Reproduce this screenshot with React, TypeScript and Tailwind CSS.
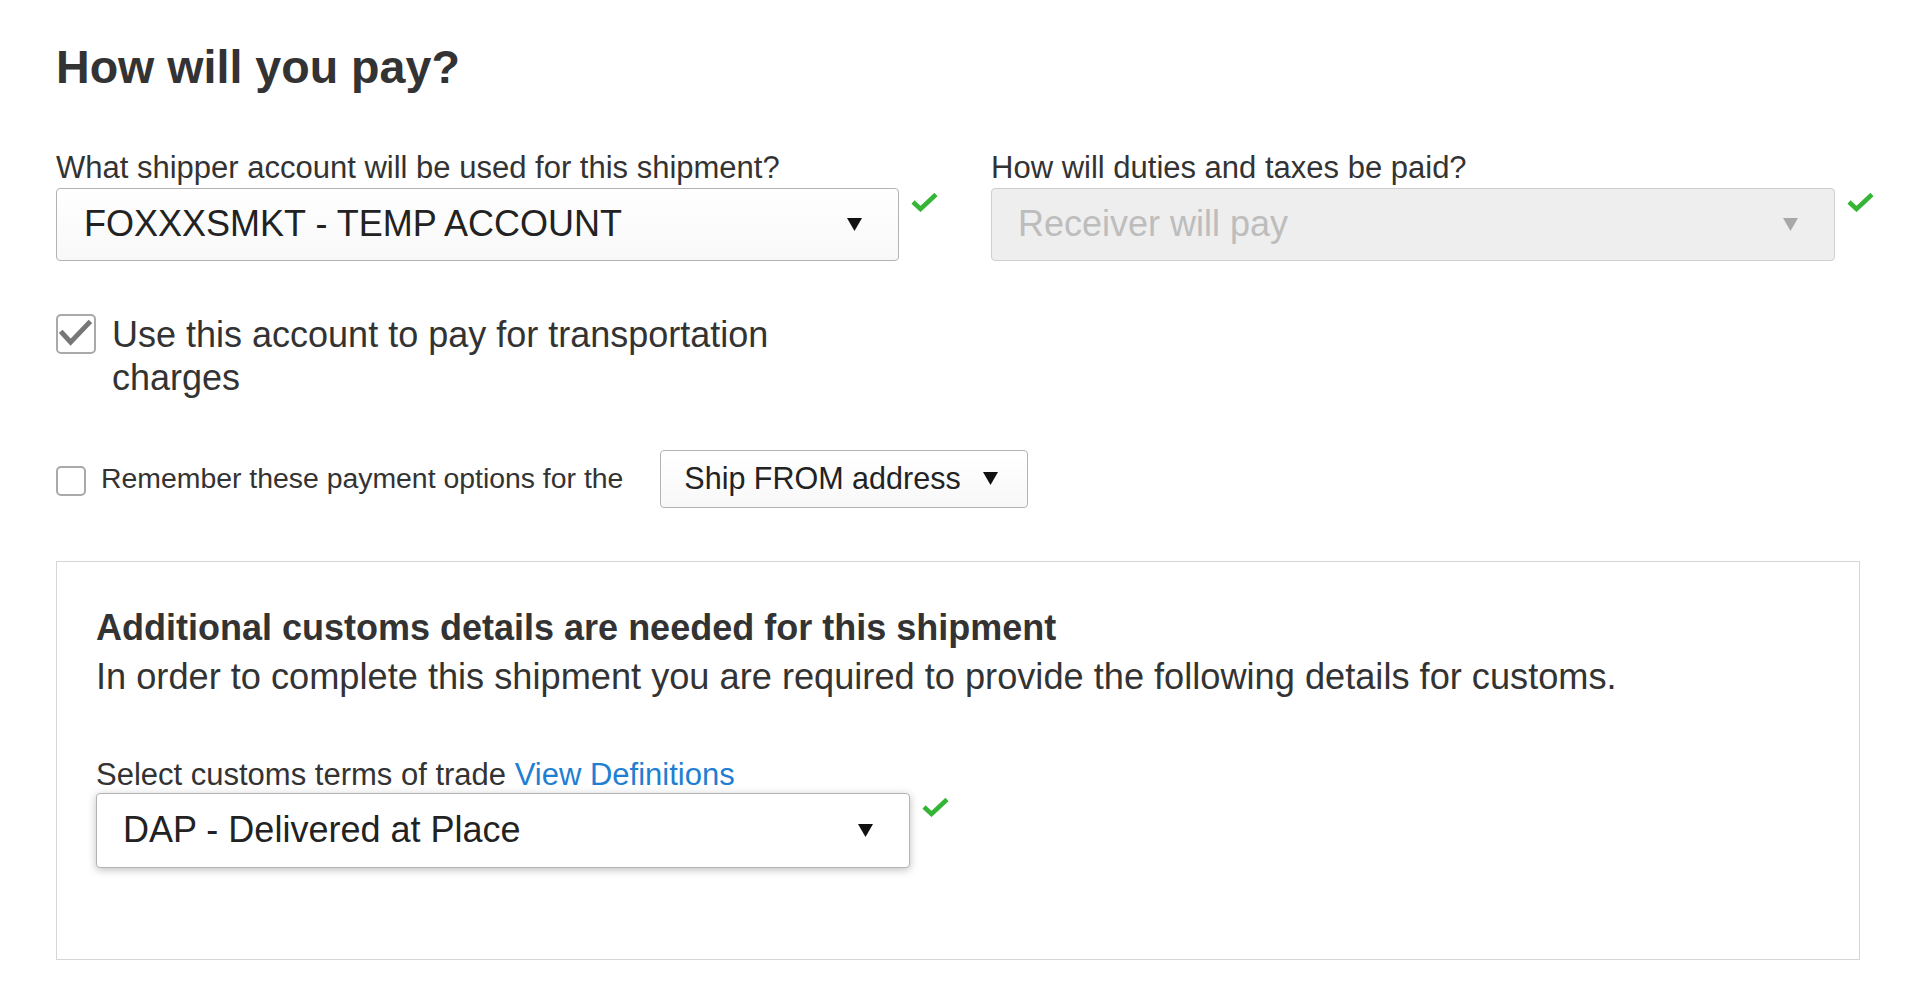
import React from 'react';

const Check: React.FC = () => (
  <svg width="27" height="20" viewBox="0 0 27 20" className="shrink-0 mt-[4px] ml-[12px]">
    <path d="M2 10 L9.5 17 L25 2.5" fill="none" stroke="#35b535" strokeWidth="4.5" />
  </svg>
);

const Caret: React.FC<{ color?: string }> = ({ color = '#111' }) => (
  <svg width="15" height="13" viewBox="0 0 15 13" className="shrink-0">
    <path d="M0 0 H15 L7.5 13 Z" fill={color} />
  </svg>
);

const App: React.FC = () => {
  return (
    <div className="min-h-screen bg-white text-[#333] font-['Liberation_Sans',Arial,sans-serif] pl-[56px] pt-[44px]">
      <h1 className="text-[46.6px] leading-none font-bold">How will you pay?</h1>

      {/* account + duties */}
      <div className="flex mt-[61px]">
        <div className="w-[935px]">
          <div className="text-[31px] leading-none">What shipper account will be used for this shipment?</div>
          <div className="flex mt-[5px]">
            <div className="w-[843px] h-[73px] border border-[#b3b3b3] rounded-[4px] bg-gradient-to-b from-white to-[#f8f8f8] flex items-center pl-[27px] pr-[36px]">
              <span className="flex-1 text-[36px] leading-none text-[#222]">FOXXXSMKT - TEMP ACCOUNT</span>
              <Caret />
            </div>
            <Check />
          </div>
        </div>
        <div>
          <div className="text-[31px] leading-none">How will duties and taxes be paid?</div>
          <div className="flex mt-[5px]">
            <div className="w-[844px] h-[73px] border border-[#cfcfcf] rounded-[4px] bg-[#eeeeee] flex items-center pl-[26px] pr-[36px]">
              <span className="flex-1 text-[36px] leading-none text-[#bdbdbd]">Receiver will pay</span>
              <Caret color="#a8a8a8" />
            </div>
            <Check />
          </div>
        </div>
      </div>

      {/* transportation checkbox */}
      <div className="flex items-start mt-[52px]">
        <div className="w-[40px] h-[40px] mt-[1px] shrink-0 border-2 border-[#a9a9a9] rounded-[5px] bg-white flex items-center justify-center">
          <svg width="38" height="38" viewBox="0 0 40 40">
            <path d="M3 17 L14 29 L36 6" fill="none" stroke="#777" strokeWidth="5.5" />
          </svg>
        </div>
        <div className="ml-[16px] max-w-[700px] text-[36px] leading-[43px]">
          Use this account to pay for transportation charges
        </div>
      </div>

      {/* remember */}
      <div className="flex items-center mt-[51px]">
        <div className="w-[30px] h-[30px] mt-[5px] border-2 border-[#a9a9a9] rounded-[5px] bg-white" />
        <span className="ml-[15px] text-[28.4px] leading-none">Remember these payment options for the</span>
        <div className="ml-[37px] w-[368px] h-[58px] border border-[#b3b3b3] rounded-[4px] bg-gradient-to-b from-white to-[#f8f8f8] flex items-center pl-[23px] pr-[29px]">
          <span className="flex-1 text-[30.5px] leading-none text-[#222]">Ship FROM address</span>
          <Caret />
        </div>
      </div>

      {/* customs box */}
      <div className="w-[1804px] mt-[53px] border border-[#d6d6d6] pl-[39px] pt-[41px] pb-[91px]">
        <div className="text-[36px] leading-[49px] font-bold">Additional customs details are needed for this shipment</div>
        <div className="text-[36.2px] leading-[49px]">
          In order to complete this shipment you are required to provide the following details for customs.
        </div>
        <div className="text-[31px] leading-none mt-[58px]">
          Select customs terms of trade <span className="text-[#1f7fd2]">View Definitions</span>
        </div>
        <div className="flex mt-[3px]">
          <div className="w-[814px] h-[75px] border border-[#b3b3b3] rounded-[4px] bg-white shadow-[0_2px_9px_rgba(0,0,0,0.25)] flex items-center pl-[26px] pr-[36px]">
            <span className="flex-1 text-[36px] leading-none text-[#222]">DAP - Delivered at Place</span>
            <Caret />
          </div>
          <Check />
        </div>
      </div>
    </div>
  );
};

export default App;
